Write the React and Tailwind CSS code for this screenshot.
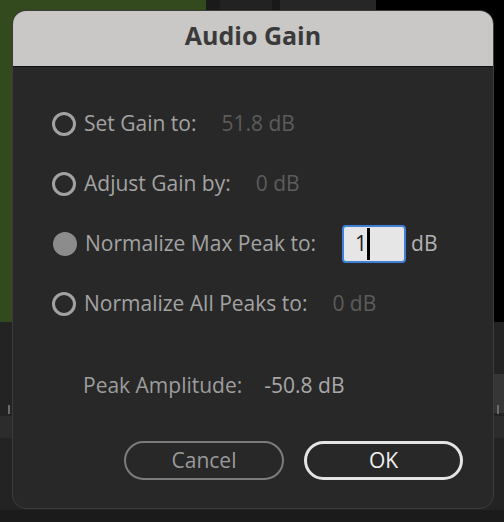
const sans = { fontFamily: '"Open Sans", "Liberation Sans", sans-serif' };

function Radio({ checked }) {
  if (checked) {
    return <span className="ml-[1px] h-[24px] w-[24px] shrink-0 rounded-full bg-[#8c8c8c]" />;
  }
  return (
    <span className="h-[24px] w-[24px] shrink-0 rounded-full border-[3px] border-[#a2a2a2]" />
  );
}

function OptionRow({ label, value, checked, children }) {
  return (
    <div className="flex h-[40px] items-center">
      <Radio checked={checked} />
      <span className="ml-[8px] text-[21px] text-[#a3a3a3]">{label}</span>
      {value && <span className="ml-[25px] text-[21px] text-[#5c5c5c]">{value}</span>}
      {children}
    </div>
  );
}

export default function App() {
  return (
    <div className="relative h-[522px] w-[504px] overflow-hidden bg-[#1b1b1b]" style={sans}>
      {/* app behind the dialog */}
      <div className="absolute left-0 top-0 h-[322px] w-[206px] bg-[#334a1e]" />
      <div className="absolute left-[206px] top-0 flex h-[12px] w-[170px]">
        <div className="w-[14px] bg-[#1a1a1a]" />
        <div className="w-[52px] bg-[#222222]" />
        <div className="w-[8px] bg-[#191919]" />
        <div className="flex-1 bg-[#262626]" />
      </div>
      <div className="absolute right-0 top-0 h-[322px] w-[128px] bg-black" />
      <div className="absolute left-0 top-[322px] h-[188px] w-[504px] bg-[#232323]" />
      <div className="absolute right-0 top-[374px] h-[39px] w-[40px] bg-[#363636]" />
      <div className="absolute left-0 top-[416px] h-[22px] w-[504px] bg-[#2c2c2c]" />
      <div className="absolute left-[8px] top-[405px] h-[9px] w-[2px] bg-[#6a6a6a]" />
      <div className="absolute right-[5px] top-[405px] h-[9px] w-[2px] bg-[#6a6a6a]" />

      {/* dialog */}
      <div className="absolute left-[12px] top-[10px] flex h-[499px] w-[482px] flex-col overflow-hidden rounded-[14px] border border-[#3c3c3c] bg-[#282828]">
        <div className="flex h-[56px] shrink-0 items-center justify-center border-b border-[#101010] bg-[#c9c8c6] pb-[5px]">
          <span className="text-[25px] font-bold text-[#3a3a3a]">Audio Gain</span>
        </div>

        <div className="flex flex-1 flex-col pl-[39px] pr-[30px] pt-[37px]">
          <div className="flex flex-col gap-[20px]">
            <OptionRow label="Set Gain to:" value="51.8 dB" />
            <OptionRow label="Adjust Gain by:" value="0 dB" />
            <OptionRow label="Normalize Max Peak to:" checked>
              <div className="ml-[26px] flex h-[38px] w-[64px] items-center rounded-[4px] border-2 border-[#3f80d8] bg-[#e6e6e6] pl-[11px]">
                <span className="text-[21px] text-[#1a1a1a]">1</span>
                <span className="h-[32px] w-[3px] bg-black" />
              </div>
              <span className="ml-[5px] text-[21px] text-[#b3b3b3]">dB</span>
            </OptionRow>
            <OptionRow label="Normalize All Peaks to:" value="0 dB" />
          </div>

          <div className="mt-[42px] flex h-[40px] items-center pl-[31px] text-[21px]">
            <span className="text-[#9d9d9d]">Peak Amplitude:</span>
            <span className="ml-[22px] text-[#a8a8a8]">-50.8 dB</span>
          </div>

          <div className="mt-[35px] flex justify-end gap-[20px]">
            <button
              type="button"
              className="h-[39px] w-[160px] rounded-full border-2 border-[#7c7c7c] text-[21px] text-[#9a9a9a]"
            >
              Cancel
            </button>
            <button
              type="button"
              className="h-[39px] w-[159px] rounded-full border-[3px] border-[#e4e4e4] text-[21px] text-[#f0f0f0]"
            >
              OK
            </button>
          </div>
        </div>
      </div>
    </div>
  );
}
